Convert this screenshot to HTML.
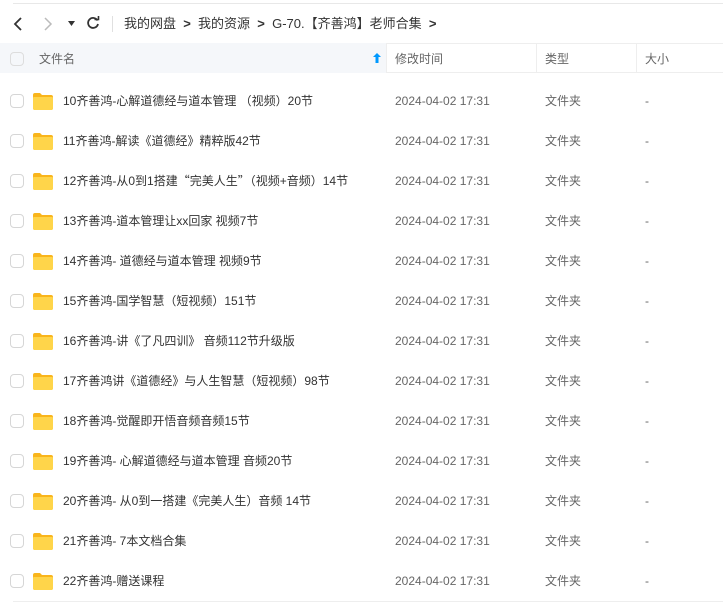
<!DOCTYPE html>
<html><head><meta charset="utf-8"><style>
*{margin:0;padding:0;box-sizing:border-box}
body{width:723px;height:616px;background:#fff;position:relative;overflow:hidden;font-family:"Liberation Sans","Noto Sans CJK SC",sans-serif;font-size:12px;color:#333;line-height:16px}
.a{position:absolute;white-space:nowrap;line-height:16px}
.cb{position:absolute;left:10px;width:14px;height:14px;border:1px solid #d6d6d6;border-radius:4px;background:#fff}
.fd{position:absolute;left:33px;width:20px;height:17px}
.g{color:#666}
.c{font-family:"Noto Sans CJK SC",sans-serif}
</style></head><body>
<div class="a" style="left:13px;top:3px;width:710px;height:1px;background:#e8e8e8"></div>
<svg class="a" style="left:12px;top:16px" width="12" height="16"><path d="M9 2 L3 8 L9 14" fill="none" stroke="#333" stroke-width="1.8"/></svg>
<svg class="a" style="left:42px;top:16px" width="12" height="16"><path d="M3 2 L9 8 L3 14" fill="none" stroke="#bbb" stroke-width="1.5"/></svg>
<svg class="a" style="left:68px;top:21px" width="8" height="6"><path d="M0 0 H7 L3.5 5Z" fill="#333"/></svg>
<svg class="a" style="left:86px;top:16px" width="14" height="14"><path d="M11.5 4.5 A5 5 0 1 0 12 8" fill="none" stroke="#333" stroke-width="1.8"/><path d="M8.5 3.5 L12.5 3.5 L12.5 0" fill="none" stroke="#333" stroke-width="1.6"/></svg>
<div class="a" style="left:112px;top:16px;width:1px;height:16px;background:#e0e0e0"></div>
<div class="a" style="left:124px;top:16px;font-size:13px;color:#333">我的网盘&nbsp;&nbsp;<b>&gt;</b>&nbsp;&nbsp;我的资源&nbsp;&nbsp;<b>&gt;</b>&nbsp;&nbsp;G-70.【齐善鸿】老师合集&nbsp;&nbsp;<b>&gt;</b></div>
<div class="a" style="left:0;top:43px;width:386px;height:30px;background:#f5f7fa"></div>
<div class="a" style="left:386px;top:43px;width:337px;height:1px;background:#eee"></div>
<div class="a" style="left:386px;top:72px;width:337px;height:1px;background:#eee"></div>
<div class="a" style="left:386px;top:43px;width:1px;height:30px;background:#eee"></div>
<div class="a" style="left:536px;top:43px;width:1px;height:30px;background:#eee"></div>
<div class="a" style="left:636px;top:43px;width:1px;height:30px;background:#eee"></div>
<div class="cb" style="top:52px;background:#f5f7fa;border-color:#ddd"></div>
<div class="a g" style="left:39px;top:51px">文件名</div>
<svg class="a" style="left:373px;top:53px" width="8" height="10"><path d="M4 0 L8 4 H5.5 V10 H2.5 V4 H0Z" fill="#09f"/></svg>
<div class="a g" style="left:395px;top:51px">修改时间</div>
<div class="a g" style="left:545px;top:51px">类型</div>
<div class="a g" style="left:645px;top:51px">大小</div>
<div id="rows"></div>
<div class="a" style="left:13px;top:601px;width:710px;height:1px;background:#eee"></div>
<script>
var n=["10齐善鸿-心解道德经与道本管理 （视频）20节","11齐善鸿-解读《道德经》精粹版42节","12齐善鸿-从0到1搭建<span class=c>“</span>完美人生<span class=c>”</span>（视频+音频）14节","13齐善鸿-道本管理让xx回家 视频7节","14齐善鸿- 道德经与道本管理 视频9节","15齐善鸿-国学智慧（短视频）151节","16齐善鸿-讲《了凡四训》 音频112节升级版","17齐善鸿讲《道德经》与人生智慧（短视频）98节","18齐善鸿-觉醒即开悟音频音频15节","19齐善鸿- 心解道德经与道本管理 音频20节","20齐善鸿- 从0到一搭建《完美人生）音频 14节","21齐善鸿- 7本文档合集","22齐善鸿-赠送课程"];
var h="";
n.forEach(function(t,i){var y=101+40*i;
h+='<div class="cb" style="top:'+(y-7)+'px"></div>';
h+='<svg class="fd" style="top:'+(y-8)+'px" viewBox="0 0 20 17"><path d="M0 2 Q0 0 2 0 H7 L9 2 H18 Q20 2 20 4 V15 Q20 17 18 17 H2 Q0 17 0 15Z" fill="#f9b51c"/><path d="M0 5 Q0 4 1 4 H19 Q20 4 20 5 V15 Q20 17 18 17 H2 Q0 17 0 15Z" fill="#ffd54a"/></svg>';
h+='<div class="a" style="left:63px;top:'+(y-8)+'px;color:#333">'+t+'</div>';
h+='<div class="a g" style="left:395px;top:'+(y-8)+'px">2024-04-02 17:31</div>';
h+='<div class="a g" style="left:545px;top:'+(y-8)+'px">文件夹</div>';
h+='<div class="a g" style="left:645px;top:'+(y-8)+'px">-</div>';});
document.getElementById("rows").innerHTML=h;
</script>
</body></html>
